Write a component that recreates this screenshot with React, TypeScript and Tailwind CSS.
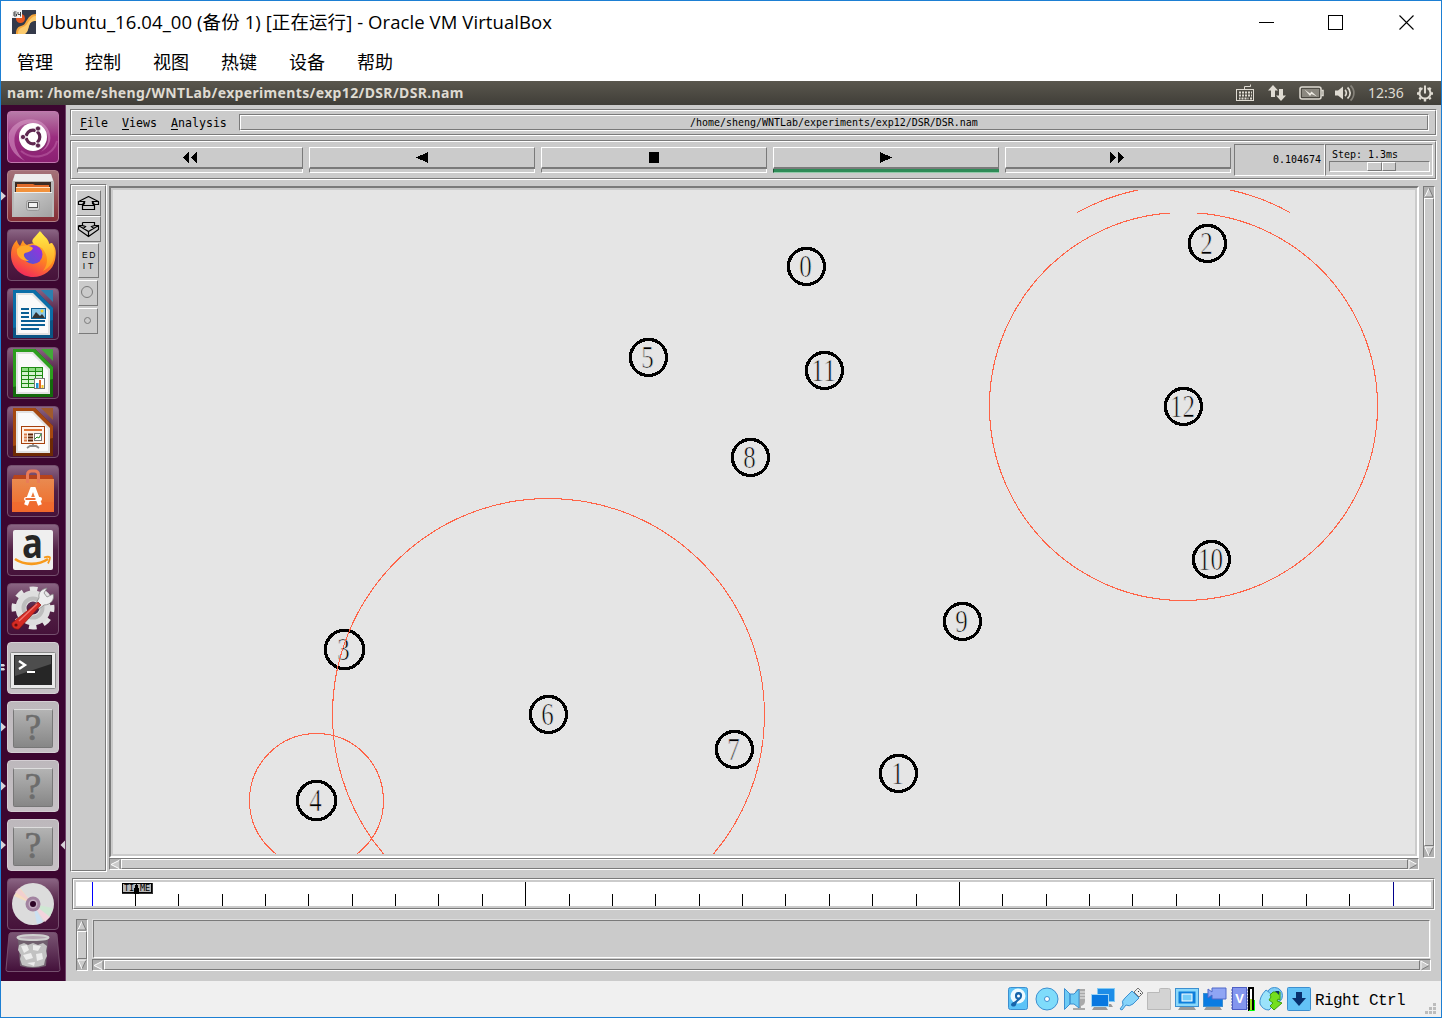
import React from "react";

type Kids = { children?: React.ReactNode; className?: string };

const SUNK = "border border-t-[#7a7a7a] border-l-[#7a7a7a] border-b-white border-r-white";
const RAISED = "border border-t-white border-l-white border-b-[#7a7a7a] border-r-[#7a7a7a]";

/* Two-pixel Tk groove: sunken outer line, raised inner line. */
function Groove({ children, className = "", inner = "" }: Kids & { inner?: string }) {
  return (
    <div className={`${SUNK} ${className}`}>
      <div className={`${RAISED} h-full w-full ${inner}`}>{children}</div>
    </div>
  );
}

function Arrow({ dir }: { dir: "up" | "down" | "left" | "right" }) {
  const rot = { up: 0, right: 90, down: 180, left: 270 }[dir];
  const light = "#ffffff";
  const dark = "#7a7a7a";
  const shade = {
    up: [light, dark, dark],
    right: [light, dark, light],
    down: [dark, light, light],
    left: [light, light, dark],
  }[dir];
  return (
    <svg width={dir === "left" ? 11 : 10} height="11" viewBox="0 0 11 11" preserveAspectRatio="none" className="shrink-0">
      <g transform={`rotate(${rot} 5.5 5.5)`}>
        <path d="M5.5 1L10 10H1z" fill="#cbcbcb" />
        <path d="M1 10L5.5 1" stroke={shade[0]} />
        <path d="M5.5 1L10 10" stroke={shade[1]} />
        <path d="M10 10H1" stroke={shade[2]} />
      </g>
    </svg>
  );
}

function VScroll({ className = "" }: { className?: string }) {
  return (
    <div className={`flex w-3 flex-col items-center bg-[#b0b0b0] ${SUNK} ${className}`}>
      <Arrow dir="up" />
      <div className={`w-full flex-1 bg-[#cbcbcb] ${RAISED}`} />
      <Arrow dir="down" />
    </div>
  );
}

function HScroll({ className = "" }: { className?: string }) {
  return (
    <div className={`flex h-3 items-center bg-[#b0b0b0] ${SUNK} ${className}`}>
      <Arrow dir="left" />
      <div className={`h-full flex-1 bg-[#cbcbcb] ${RAISED}`} />
      <Arrow dir="right" />
    </div>
  );
}

/* ---------- window chrome ---------- */

function VBoxLogo() {
  return (
    <svg width="24" height="24" viewBox="0 0 24 24" className="shrink-0">
      <rect width="24" height="24" fill="#343a4a" />
      <path d="M4 24c0-4 1-7 5-8s4-3 6-6 4-6 9-6v7c-5 0-6 2-7 5s-2 7-5 8z" fill="#f6a63c" />
      <path d="M6 24c0-4 2-6 5-7s4-3 6-6 4-5 7-5v5c-5 0-6 2-7 5s-1 6-4 8z" fill="#fccb6e" />
      <circle cx="8.500" cy="8.500" r="4.500" fill="#e8561f" />
      <rect width="10" height="8" fill="#f4f4f4" />
      <path d="M4.500 2H2v4h2.500V4H2M6 2v2.500h2.500M8.500 2v4.500" stroke="#444" fill="none" />
    </svg>
  );
}

function TitleBar() {
  return (
    <div className="flex h-[42px] items-center bg-white pl-[11px] pr-[27px]">
      <VBoxLogo />
      <span className="ml-[5px] whitespace-pre font-['Open_Sans','Noto_Sans_CJK_SC',sans-serif] text-[18.500px] leading-6 tracking-[0.080px] text-black">
        Ubuntu_16.04_00 (备份 1) [正在运行] - Oracle VM VirtualBox
      </span>
      <div className="ml-auto flex items-center text-black">
        <svg width="15" height="15" shapeRendering="crispEdges"><path d="M0 7.500h15" stroke="currentColor" /></svg>
        <svg width="15" height="15" shapeRendering="crispEdges" className="ml-[54px]"><rect x=".5" y=".5" width="14" height="14" fill="none" stroke="currentColor" /></svg>
        <svg width="15" height="15" className="ml-14"><path d="M.5.5l14 14M14.500.5l-14 14" stroke="currentColor" strokeWidth="1.100" /></svg>
      </div>
    </div>
  );
}

function MenuBar() {
  return (
    <div className="flex h-[38px] items-center gap-8 bg-white pb-[2px] pl-4 font-['Noto_Sans_CJK_SC',sans-serif] text-[18px] text-black">
      {["管理", "控制", "视图", "热键", "设备", "帮助"].map((m) => (
        <span key={m}>{m}</span>
      ))}
    </div>
  );
}

function TopPanel() {
  return (
    <div className="flex h-6 items-center bg-gradient-to-b from-[#5a574e] to-[#403e38] pl-[6px] pr-[7px] text-[#dfdbd2]">
      <span className="font-['Noto_Sans',sans-serif] text-[14px] font-bold leading-6 tracking-[0.350px]">
        nam: /home/sheng/WNTLab/experiments/exp12/DSR/DSR.nam
      </span>
      <div className="ml-auto flex items-center">
        <svg width="20" height="20" viewBox="0 0 20 20" fill="none" stroke="#dfdbd2">
          <path d="M9.500 6.500v-3h6V1.500" />
          <rect x="1.500" y="6.500" width="17" height="11" />
          <path d="M4 9.500h13M4 12.500h13M6.500 15.500h7M4 15.500h1.500M15 15.500h2" strokeWidth="2" strokeDasharray="2 1" />
        </svg>
        <svg width="18" height="18" viewBox="0 0 18 18" fill="#dfdbd2" className="ml-[13px]">
          <path d="M5 1L0 6.500h3V13h4V6.500h3zM13 17l5-5.500h-3V5h-4v6.500H8z" />
        </svg>
        <svg width="25" height="14" viewBox="0 0 25 14" fill="none" stroke="#dfdbd2" className="ml-[13px]">
          <rect x="1" y="1" width="21" height="12" rx="2" strokeWidth="1.500" />
          <rect x="3" y="3" width="17" height="8" fill="#8b887f" stroke="none" />
          <path d="M22.500 4.500h1.500v5h-1.500" strokeWidth="1.500" />
          <path d="M5.500 3.500l5.500 4 1.500-2 5.500 5-5.500-2.500-1.500 2z" fill="#efece4" stroke="none" />
        </svg>
        <svg width="20" height="18" viewBox="0 0 20 18" fill="none" stroke="#dfdbd2" strokeWidth="1.700" className="ml-[11px]">
          <path d="M0 6.500h3L8 2.500v13l-5-4H0z" fill="#dfdbd2" stroke="none" />
          <path d="M10 6a4 4 0 010 6M12.500 3.500a7 7 0 010 11" />
          <path d="M15.500 1.500a10 10 0 010 15" stroke="#85827a" />
        </svg>
        <span className="ml-[13px] w-[36px] whitespace-nowrap font-['Noto_Sans',sans-serif] text-[14px] leading-6">12:36</span>
        <svg width="18" height="18" viewBox="0 0 18 18" fill="none" stroke="#dfdbd2" className="ml-3">
          <path d="M6.500 4.200a5.500 5.500 0 105 0" strokeWidth="2" />
          <path d="M9 1.500v8" strokeWidth="2" />
          <path d="M1 9.500h2M15 9.500h2M3.300 3.800l1.500 1.500M14.700 3.800l-1.500 1.500M3.300 15.200l1.500-1.500M14.700 15.200l-1.500-1.500M9 15v2.500" strokeWidth="2.400" />
        </svg>
      </div>
    </div>
  );
}

/* ---------- launcher ---------- */

function DocIcon({ main, dark, fold, children }: { main: string; dark: string; fold: string; children: React.ReactNode }) {
  return (
    <g>
      <path d="M6 2h22l18 18v30H6z" fill={dark} />
      <path d="M6 2h22l18 18v12L6 40z" fill={main} />
      <path d="M9 5h17l17 17v25H9z" fill="#e2e2e2" />
      <path d="M11 7h14l16 16v22H11z" fill="#fafafa" />
      <path d="M34 2h12v12z" fill={fold} />
      {children}
    </g>
  );
}

function Question() {
  return (
    <g>
      <rect x="6.500" y="8.500" width="39" height="38" rx="1" fill="url(#qg)" stroke="#777" />
      <path d="M7 8.500h38" stroke="#ddd" />
      <text x="26" y="39" textAnchor="middle" fontFamily="Liberation Serif, serif" fontSize="37" fill="#6c6c6c" stroke="#6c6c6c" strokeWidth=".7">?</text>
    </g>
  );
}

function AppIcon({ kind }: { kind: string }) {
  switch (kind) {
    case "dash":
      return (
        <g>
          <path d="M2 22C8 6 34 2 42 20c4 10-1 17-8 21 8-7 9-15 3-22C29 9 12 10 8 24c-2 8 1 18 10 26C6 44 0 34 2 22z" fill="#e0a5d0" opacity=".5" />
          <path d="M50 30C46 46 26 50 14 40" fill="none" stroke="#d68ac2" strokeOpacity=".35" strokeWidth="2" />
          <circle cx="26.500" cy="27" r="14.500" fill="#7d3069" opacity=".5" />
          <circle cx="26" cy="26" r="14" fill="#fff" />
          <circle cx="26" cy="26" r="6.800" fill="none" stroke="#5e2750" strokeWidth="3.200" />
          <path d="M26 26h-10M26 26l5-9M26 26l5 9" stroke="#fff" strokeWidth="1.400" />
          <circle cx="16" cy="26" r="2.600" fill="#5e2750" stroke="#fff" strokeWidth=".8" />
          <circle cx="31" cy="17.500" r="2.600" fill="#5e2750" stroke="#fff" strokeWidth=".8" />
          <circle cx="31" cy="34.500" r="2.600" fill="#5e2750" stroke="#fff" strokeWidth=".8" />
        </g>
      );
    case "files":
      return (
        <g>
          <path d="M8 4h36l3 8v35H5V12z" fill="#b9b9b9" />
          <path d="M8 4h36l2 7H6z" fill="#ececec" />
          <rect x="8" y="12" width="36" height="12" fill="#3b2c25" />
          <path d="M10 14h16l2 1h14v8H10z" fill="#e06b2a" />
          <path d="M9 18h34v5H9z" fill="#f2923c" />
          <path d="M9 17.500h34" stroke="#ffe0c0" />
          <rect x="7" y="22" width="38" height="25" fill="url(#met)" />
          <path d="M7 22.500h38" stroke="#eee" />
          <rect x="19.500" y="30.500" width="13" height="10" rx="2" fill="#ccc" stroke="#9a9a9a" />
          <rect x="21.500" y="32.500" width="9" height="5" fill="#f2f2f2" stroke="#555" />
        </g>
      );
    case "firefox":
      return (
        <g>
          <path d="M4 26c0-8 3-12 6-15 0 2 1 4 3 6l3-6c1 3 2 4 4 5 4-2 9-2 13 0 0-5-1-9 1-13 3 5 8 7 8 12l3-1c5 6 4 11 3 17-2 10-11 17-22 17S4 39 4 26z" fill="url(#ffx)" />
          <path d="M33 2c3 5 8 7 9 13l3-1c5 12 2 22-9 28 6-8 5-16-1-23-5-3-12-4-9-9z" fill="url(#ffy)" />
          <circle cx="26" cy="25.500" r="9.500" fill="url(#glb)" />
          <path d="M10 20c4-5 13-4 16-1-1 3-4 4-8 5-3 2 0 6 4 8-7 0-13-4-12-12z" fill="#ffab2a" />
        </g>
      );
    case "writer":
      return (
        <DocIcon main="#0b6ea8" dark="#0a5585" fold="#2c7fae">
          <path d="M14 21h8M14 25h8M14 29h8M14 33h24M14 37h24M14 41h18" stroke="#0b5f94" strokeWidth="2" />
          <rect x="24.500" y="20.500" width="14" height="10" fill="#8cc9e8" stroke="#0b5f94" />
          <path d="M25 30l4-6 4 4 2-2 3 4z" fill="#333" />
          <circle cx="35" cy="23" r="1.500" fill="#f5d02c" />
        </DocIcon>
      );
    case "calc":
      return (
        <DocIcon main="#2c9e1e" dark="#146a0c" fold="#43a838">
          <rect x="14" y="20" width="22" height="21" fill="#1d8a12" />
          {[0, 1, 2].map((c) =>
            [0, 1, 2, 3, 4].map((r) => (
              <rect key={`${c}-${r}`} x={15 + c * 7} y={21 + r * 4} width="6" height="3" fill={r ? "#d6f3d0" : "#8fdc84"} />
            )),
          )}
          <rect x="27.500" y="31.500" width="10" height="10" fill="#fff" stroke="#777" />
          <path d="M29 36h2.500v5H29z" fill="#1c93d2" />
          <path d="M32 33h2v8h-2z" fill="#e0662a" />
          <path d="M34.500 38h2v3h-2z" fill="#f3c41d" />
        </DocIcon>
      );
    case "impress":
      return (
        <DocIcon main="#a5480f" dark="#6e2a04" fold="#a05a2c">
          <rect x="14.500" y="20.500" width="23" height="17" fill="#fff2e8" stroke="#a5400d" />
          <path d="M17 24h18" stroke="#e07434" strokeWidth="2" />
          <path d="M17 28.500h3M17 31.500h3M17 34.500h3" stroke="#d97b49" strokeWidth="2" />
          <path d="M21 28.500h5M21 31.500h5M21 34.500h5" stroke="#5e2508" strokeWidth="2" />
          <rect x="27.500" y="27.500" width="7" height="7" fill="#fff" stroke="#777" />
          <path d="M28 33l2-2 2 1 2-4" stroke="#228c1e" fill="none" />
          <path d="M20 42l3-2h6l3 2M26 38v3" stroke="#888" strokeWidth="1.800" fill="none" />
        </DocIcon>
      );
    case "software":
      return (
        <g>
          <path d="M7 10h38l2 5H5z" fill="#b7431c" />
          <path d="M5 14h42v33H5z" fill="url(#bag)" />
          <path d="M5 37h42v10H5z" fill="#f0682e" opacity=".6" />
          <path d="M20.500 18v-8q0-4 4-4h3q4 0 4 4v8" fill="none" stroke="#e97b58" strokeWidth="3" />
          <path d="M19 40L25 24h2l6 16" fill="none" stroke="#fff" strokeWidth="4" />
          <rect x="17" y="32" width="18" height="4" rx="2" fill="#fff" />
          <path d="M18.500 34h10" stroke="#ec5d1f" strokeWidth="1.800" />
        </g>
      );
    case "amazon":
      return (
        <g>
          <rect x="6" y="6" width="40" height="40" rx="2" fill="#efefef" />
          <text x="25.500" y="34" textAnchor="middle" textLength="21" lengthAdjust="spacingAndGlyphs" fontFamily="Open Sans, sans-serif" fontWeight="700" fontSize="41" fill="#262626">a</text>
          <path d="M8 35c10 7 24 6 33 0" fill="none" stroke="#f79a1c" strokeWidth="2.600" />
          <path d="M37 33.500c3-1 5-1 6 0 0 2-1 4-2 6" fill="none" stroke="#f79a1c" strokeWidth="1.800" />
        </g>
      );
    case "settings":
      return (
        <g>
          <circle cx="26" cy="25" r="18.500" fill="none" stroke="#e4e4e4" strokeWidth="6" strokeDasharray="7.500 7.030" strokeDashoffset="3.700" />
          <circle cx="26" cy="25" r="12" fill="none" stroke="#dedede" strokeWidth="11" />
          <circle cx="26" cy="25" r="9.500" fill="none" stroke="#bdbdbd" strokeWidth="4" />
          <path d="M32 15c-1-6 3-9 8-10l-3 5 3 4 6-3c2 5-2 11-9 11l-5 4-4-4z" fill="#eee" stroke="#888" strokeWidth=".8" />
          <path d="M31 19l3 3-22 24c-4 1-8-2-7-6z" fill="#d52b24" stroke="#8e1410" strokeWidth=".7" />
          <path d="M12 38l18-17" stroke="#f1736d" strokeWidth="1.500" />
          <circle cx="9" cy="42" r="1.600" fill="#6b0f0c" />
        </g>
      );
    case "terminal":
      return (
        <g>
          <rect x="3.500" y="10.500" width="45" height="36" rx="1" fill="#e9e9e9" stroke="#8a8a8a" />
          <rect x="7" y="13" width="38" height="30" fill="#262626" />
          <path d="M8 14h36v8L8 34z" fill="#4d4d4d" />
          <path d="M12 19l6 4-6 4" fill="none" stroke="#fff" strokeWidth="2.400" />
          <path d="M20 30h8" stroke="#fff" strokeWidth="2" />
        </g>
      );
    case "disc":
      return (
        <g>
          <circle cx="26" cy="26" r="21" fill="#dcdcdc" />
          <path d="M26 26L7 18 13 10z" fill="#f5dcbf" />
          <path d="M26 26L8 14l4-4z" fill="#f1c9d5" opacity=".7" />
          <path d="M26 26l20 4-3 9z" fill="#cfe7d3" />
          <path d="M26 26l17 13-5 5z" fill="#f3d4dd" />
          <path d="M26 26l10 18-6 2z" fill="#cbe0f2" />
          <circle cx="26" cy="26" r="7.500" fill="#a283a0" />
          <circle cx="26" cy="26" r="4.500" fill="#c3adc1" />
          <circle cx="26" cy="26" r="3" fill="#2d0426" />
        </g>
      );
    case "unknown":
      return <Question />;
    default:
      return null;
  }
}

const TILE = "flex h-[52px] w-[52px] shrink-0 rounded-[4px] border";
const TILE_DARK = `${TILE} border-[#75506e] bg-gradient-to-b from-[#8a6483] via-[#512045] to-[#46123a]`;
const TILE_LIGHT = `${TILE} border-[#d4ced3] bg-gradient-to-b from-[#bdb8bc] to-[#c6c1c5]`;

const APPS: { kind: string; tile: string; mark?: string; active?: boolean }[] = [
  { kind: "dash", tile: `${TILE} border-[#c177ae] bg-gradient-to-b from-[#b77ba8] via-[#9b2d80] to-[#8b1f72]` },
  { kind: "files", tile: `${TILE} border-[#b08088] bg-gradient-to-b from-[#a47279] to-[#842c35]`, mark: "one" },
  { kind: "firefox", tile: TILE_DARK },
  { kind: "writer", tile: TILE_DARK },
  { kind: "calc", tile: TILE_DARK },
  { kind: "impress", tile: TILE_DARK },
  { kind: "software", tile: TILE_DARK },
  { kind: "amazon", tile: TILE_DARK },
  { kind: "settings", tile: TILE_DARK },
  { kind: "terminal", tile: TILE_LIGHT, mark: "two" },
  { kind: "unknown", tile: TILE_LIGHT, mark: "one" },
  { kind: "unknown", tile: TILE_LIGHT, mark: "one" },
  { kind: "unknown", tile: TILE_LIGHT, mark: "one", active: true },
  { kind: "disc", tile: TILE_DARK },
];

function Launcher() {
  return (
    <div className="flex w-[65px] shrink-0 flex-col border-r border-[#6f4268] bg-[#3c0630] pt-[6px]">
      <svg width="0" height="0" className="absolute">
        <defs>
          <linearGradient id="qg" x2="0" y2="1"><stop stopColor="#b4b4b4" /><stop offset="1" stopColor="#868686" /></linearGradient>
          <linearGradient id="met" x2="1" y2="1"><stop stopColor="#d0d0d0" /><stop offset="1" stopColor="#a2a2a2" /></linearGradient>
          <linearGradient id="bag" x2="0" y2="1"><stop stopColor="#e98a50" /><stop offset="1" stopColor="#f06a28" /></linearGradient>
          <linearGradient id="ffx" x1=".8" y1="0" x2=".3" y2="1"><stop stopColor="#ffd03a" /><stop offset=".5" stopColor="#ff8a1e" /><stop offset="1" stopColor="#f3265c" /></linearGradient>
          <linearGradient id="ffy" x2="0" y2="1"><stop stopColor="#fff04a" /><stop offset="1" stopColor="#ff961e" /></linearGradient>
          <linearGradient id="glb" x1="1" x2="0" y2="1"><stop stopColor="#a12be0" /><stop offset="1" stopColor="#4a5bd0" /></linearGradient>
        </defs>
      </svg>
      <div className="flex flex-col gap-[7px]">
        {APPS.map((a, i) => (
          <div key={i} className="flex h-[52px] items-center">
            <svg width="6" height="12" viewBox="0 0 6 12" fill="#d9d3d8" className="shrink-0">
              {a.mark === "one" && <path d="M0 1.500L5 6 0 10.500z" />}
              {a.mark === "two" && <path d="M0 2h3l1 1.500-1 1H0zM0 6h3l1 1.500-1 1H0z" />}
            </svg>
            <div className={a.tile}>
              <svg width="52" height="52" viewBox="0 0 52 52" className="-m-px shrink-0">
                <AppIcon kind={a.kind} />
              </svg>
            </div>
            {a.active && (
              <svg width="6" height="12" viewBox="0 0 6 12" fill="#d9d3d8" className="shrink-0"><path d="M6 1.500L1.500 6 6 10.500z" /></svg>
            )}
          </div>
        ))}
      </div>
      <svg width="56" height="43" viewBox="0 0 56 43" className="ml-1 mt-px shrink-0">
        <defs>
          <linearGradient id="tr" x2="0" y2="1"><stop stopColor="#7b5674" /><stop offset="1" stopColor="#43103a" /></linearGradient>
        </defs>
        <path d="M6.500 1.500h43q2 0 2.500 2l3 35q0 2-2 2H3q-2 0-2-2l3-35q.5-2 2.500-2z" fill="url(#tr)" stroke="#75506e" />
        <path d="M13 8l2 27q13 4 26 0l2-27z" fill="#70606e" />
        <ellipse cx="28" cy="6.500" rx="15.500" ry="2.600" fill="#b5a5b2" stroke="#cfcfcf" strokeWidth="2" />
        <path d="M14 14l5-2 4 2 5-2 5 2 5-2 4 3-1 5 1 5-2 4-1 5q-11 4-22 0l-2-6 1-4-3-5z" fill="#c2c2c2" />
        <path d="M16 15l6-1 2 5-5 3zM28 14l8 1-3 5-5-1zM18 24l8-2 2 5-7 2zM31 23l6-1 1 6-6 2zM22 32l8-1-1 4z" fill="#ececec" />
      </svg>
    </div>
  );
}

/* ---------- nam ---------- */

function NamMenu() {
  return (
    <Groove className="h-[27px]" inner="flex items-center pl-2 pr-[6px] font-['DejaVu_Sans_Mono',monospace] text-[11.620px] text-black">
      {["File", "Views", "Analysis"].map((m) => (
        <span key={m} className="mr-[14px] leading-[20px]">
          <span className="underline underline-offset-2">{m[0]}</span>
          {m.slice(1)}
        </span>
      ))}
      <Groove className="-ml-[2px] h-[17px] flex-1" inner="text-center font-['DejaVu_Sans_Mono',monospace] text-[9.960px] leading-[13px]">
        /home/sheng/WNTLab/experiments/exp12/DSR/DSR.nam
      </Groove>
    </Groove>
  );
}

const CONTROLS = [
  "M7 0v11L1 5.500zM15 0v11L9 5.500z",
  "M14 0v11L2 5.500z",
  "M3 0h10v11H3z",
  "M2 0v11L14 5.500z",
  "M0 0v11L6 5.500zM8 0v11L14 5.500z",
];

function Toolbar() {
  return (
    <Groove className="h-10" inner="flex pl-[5px] pt-[2px]">
      <div className="flex gap-[6px] pt-[3px]">
        {CONTROLS.map((d, i) => (
          <div key={i} className="h-[26px] w-[226px]">
            <div className="flex h-[22px] items-center justify-center border border-b-2 border-b-[#7a7a7a] border-l-white border-r-[#7a7a7a] border-t-white">
              <svg width="16" height="11" shapeRendering="crispEdges"><path d={d} /></svg>
            </div>
            <div
              className={
                i === 3
                  ? "h-1 border-b border-l border-b-[#8fc9a8] border-l-[#1c5535] bg-[#2e8b57]"
                  : "h-1 border-b border-l border-r border-b-white border-l-[#7a7a7a] border-r-white"
              }
            />
          </div>
        ))}
      </div>
      <div className={`ml-[3px] h-8 w-[91px] pr-[3px] text-right font-['DejaVu_Sans_Mono',monospace] text-[9.960px] leading-[30px] ${SUNK}`}>0.104674</div>
      <div className={`h-8 w-[108px] pl-[3px] ${SUNK}`}>
        <div className="h-4 pl-[3px] font-['DejaVu_Sans_Mono',monospace] text-[9.960px] leading-[20px]">Step: 1.3ms</div>
        <div className={`flex h-[11px] w-[101px] pl-[37px] ${SUNK}`}>
          <div className={`h-[9px] w-[15px] ${RAISED}`} />
          <div className={`h-[9px] w-[14px] ${RAISED}`} />
        </div>
      </div>
    </Groove>
  );
}

function ZoomTools() {
  return (
    <Groove className="w-[37px]" inner="pt-1 text-black">
      <div className={`ml-1 h-[26px] w-[25px] ${RAISED}`}>
        <svg width="23" height="24" viewBox="0 0 23 24" fill="none" stroke="#000" strokeWidth="1.200">
          <path d="M11.500 5.500l-10 5v3h4M11.500 5.500l10 5v3h-4M1.500 10.500h6l-2 3M21.500 10.500h-6l2 3M5.500 14.500h12v4h-12zM7.500 10.500v2l-2 2M15.500 10.500v2l2 2" />
        </svg>
      </div>
      <div className={`ml-1 h-[26px] w-[25px] ${RAISED}`}>
        <svg width="23" height="24" viewBox="0 0 23 24" fill="none" stroke="#000" strokeWidth="1.200">
          <path d="M5.500 5.500h12v3l-3 1 2 2M5.500 5.500v3l3 1-2 2M1.500 8.500h5M16.500 8.500h5v4l-10 7-10-7v-4M1.500 8.500l10 6 10-6M11.500 14.500v5" />
        </svg>
      </div>
      <div className={`ml-[6px] mt-px flex h-[35px] w-[21px] flex-col items-center justify-center pl-[2px] pt-px font-['Liberation_Sans',sans-serif] text-[8.500px] leading-[11px] tracking-[1.500px] ${RAISED}`}>
        <span>ED</span>
        <span className="tracking-[3px]">IT</span>
      </div>
      <div className={`ml-[6px] mt-[2px] h-[26px] w-5 ${RAISED}`}>
        <svg width="18" height="24" fill="none" stroke="#7a7a7a"><circle cx="8" cy="11" r="5.500" /></svg>
      </div>
      <div className={`ml-[6px] mt-[2px] h-[26px] w-5 ${RAISED}`}>
        <svg width="18" height="24" fill="none" stroke="#7a7a7a"><circle cx="8.500" cy="11.500" r="3" /></svg>
      </div>
    </Groove>
  );
}

/* [label, x, y, radius] */
const NODES: [string, number, number, number][] = [
  ["0", 806.5, 266.5, 18],
  ["1", 898.5, 773.5, 18],
  ["2", 1207.5, 243.5, 18],
  ["3", 344.5, 649.5, 19],
  ["4", 316.5, 800.5, 19],
  ["5", 648.5, 357.5, 18],
  ["6", 548.5, 714.5, 18],
  ["7", 734.5, 749.5, 18],
  ["8", 750.5, 457.5, 18],
  ["9", 962.5, 621.5, 18],
  ["10", 1211.5, 559.5, 18],
  ["11", 824.5, 370.5, 18],
  ["12", 1183.5, 406.5, 18],
];

function NetworkView() {
  return (
    <svg width="1302" height="664" viewBox="113 190 1302 664" className="block bg-[#e5e5e5]">
      {NODES.map(([label, x, y, r]) => (
        <g key={label}>
          <circle cx={x} cy={y} r={r + 0.1} fill="none" stroke="#000" strokeWidth="3.200" shapeRendering="crispEdges" />
          <text
            x={x - 1}
            y={y + 10.5}
            textAnchor="middle"
            textLength={label.length * 12.5}
            lengthAdjust="spacingAndGlyphs"
            fontFamily="Liberation Serif, serif"
            fontSize="30.5"
            stroke="#e5e5e5"
            strokeWidth=".7"
          >
            {label}
          </text>
        </g>
      ))}
      <g fill="none" stroke="#ff6347" strokeWidth="1.080" shapeRendering="crispEdges">
        <circle cx="548.5" cy="714.5" r="216" />
        <circle cx="316.5" cy="800.5" r="67" />
        <path d="M1197.500 213A194 194 0 1 1 1169.500 213" />
        <path d="M1077 212.500A221.300 221.300 0 0 1 1140 189.500M1228 189.500A221.300 221.300 0 0 1 1290 212.500" />
      </g>
    </svg>
  );
}

const TICKS = Array.from({ length: 31 }, (_, i) => i);

function Timeline() {
  return (
    <Groove className="ml-[2px] h-8 w-[1363px]" inner="p-[2px]">
      <svg width="1355" height="24" viewBox="76 882 1355 24" className="block bg-white" shapeRendering="crispEdges">
        {TICKS.map((i) => (
          <rect
            key={i}
            x={Math.floor(92 + i * 43.37)}
            y={i % 10 ? 894 : 882}
            width="1"
            height={i % 10 ? 12 : 24}
            fill={i === 0 ? "#0000ff" : i === 30 ? "#00008b" : "#000"}
          />
        ))}
        <rect x="122" y="883" width="31" height="11" fill="#333" />
        <rect x="122.500" y="883.500" width="29" height="9" fill="#b8b8b8" stroke="#000" />
        <g fontFamily="DejaVu Sans Mono, monospace" fontSize="8.500" fill="#000">
          <text x="124" y="891">TI</text>
          <text x="140" y="891">ME</text>
        </g>
        <path d="M136 883h1l1 4 1 2v5h-5v-5l1-2z" />
      </svg>
    </Groove>
  );
}

function Nam() {
  return (
    <div className="flex flex-1 flex-col bg-[#cbcbcb] pl-1 pr-1 pt-1">
      <NamMenu />
      <div className="h-1" />
      <Toolbar />
      <div className="mt-1 flex h-[688px]">
        <ZoomTools />
        <div className="ml-[2px] mt-[2px] w-[1310px]">
          <div className="h-[672px] border-2 border-b-white border-l-[#7a7a7a] border-r-white border-t-[#7a7a7a] p-[2px]">
            <NetworkView />
          </div>
          <HScroll />
        </div>
        <VScroll className="ml-1 mt-[2px] h-[672px]" />
      </div>
      <div className="mt-[6px]">
        <Timeline />
      </div>
      <div className="mt-[9px] flex h-[52px] pl-[6px]">
        <VScroll />
        <div className="ml-1 w-[1339px]">
          <div className="h-10 border border-[#dddddd] border-b-[#cbcbcb]">
            <div className={`h-[38px] ${SUNK}`} />
          </div>
          <HScroll />
        </div>
      </div>
    </div>
  );
}

/* ---------- VirtualBox status bar ---------- */

function StatusIcons() {
  const s = "#3c8fd0";
  return (
    <div className="flex gap-1">
      <svg width="24" height="24" viewBox="0 0 24 24">
        <rect x="1.500" y=".5" width="19" height="22" rx="2" fill="#5cc3f7" stroke={s} />
        <circle cx="11" cy="9" r="7.500" fill="#eefaff" />
        <path d="M8 8a3.500 3.500 0 117 1c0 4-5 4-6 9-1 2-4 2-5 0 0-3 5-3 6-6-2 0-2-2-2-4z" fill="#1764ab" />
        <circle cx="11.500" cy="9" r="1.500" fill="#fff" />
      </svg>
      <svg width="24" height="24" viewBox="0 0 24 24">
        <circle cx="12" cy="12" r="11" fill="#7fdcfb" stroke={s} />
        <circle cx="12" cy="12" r="2.500" fill="#fff" stroke={s} />
      </svg>
      <svg width="24" height="24" viewBox="0 0 24 24">
        <path d="M14 2h8v12q0 4-4 5v2h4v2H10v-2h5v-2q-3-1-3-5V5z" fill="#a9a9a9" />
        <path d="M17 5h5M17 8h5M17 11h5" stroke="#eee" />
        <path d="M1.500 1.500L7 7v10l-5.500 5.500zM7 7h4l5-5v19l-5-4H7z" fill="#6ecbf5" stroke={s} />
      </svg>
      <svg width="24" height="24" viewBox="0 0 24 24">
        <path d="M12 17h8l2 3h-9z" fill="#999" />
        <rect x="6.500" y="1.500" width="17" height="13" fill="#1d8de8" stroke="#83c9f2" />
        <rect x=".5" y="7.500" width="17" height="12" fill="#0878e0" stroke="#9fd5f4" />
        <path d="M3 20h12l2 3H1z" fill="#999" />
      </svg>
      <svg width="24" height="24" viewBox="0 0 24 24">
        <path d="M15 5l4-4 5 5-4 4z" fill="#eee" stroke="#777" />
        <path d="M19 4l1 1M21 6l1 1" stroke="#333" />
        <path d="M13 4l7 7-6 6q-4 3-7 1l-4 5-2-1 3-4q-2-4 2-7z" fill="#86d4fa" stroke={s} />
      </svg>
      <svg width="24" height="24" viewBox="0 0 24 24">
        <path d="M.5 5.500h12v-3q0-1 1-1h8q2 0 2 2v19H.5z" fill="#d3d3d3" stroke="#b9b9b9" />
      </svg>
      <svg width="24" height="24" viewBox="0 0 24 24">
        <path d="M5 20h14l2 3H3z" fill="#999" />
        <rect x=".5" y="1.500" width="23" height="18" fill="#8ad8fb" stroke={s} />
        <rect x="3.500" y="4.500" width="17" height="12" fill="#0d7fdc" />
        <rect x="7" y="7" width="10" height="7" fill="#74cdf8" stroke="#fff" />
      </svg>
      <svg width="24" height="24" viewBox="0 0 24 24">
        <rect x=".5" y="6.500" width="19" height="13" fill="#0a7ce2" stroke={s} />
        <path d="M3 20h14l2 3H1z" fill="#999" />
        <path d="M5 2l4 3V1h14v11H9V8l-4 3z" fill="#8fa5f4" stroke="#5068c8" />
      </svg>
      <svg width="24" height="24" viewBox="0 0 24 24">
        <path d="M0 3h17M0 6h17M0 9h17M0 12h17M0 15h17M0 18h17M0 21h17" stroke="#4a56b0" />
        <rect x="1.500" y=".5" width="14" height="22" fill="#8496ee" stroke="#4e5fc5" />
        <text x="8.500" y="16" textAnchor="middle" fontFamily="Liberation Sans, sans-serif" fontWeight="700" fontSize="13" fill="#fff">V</text>
        <rect x="17" y="0" width="6" height="24" fill="#000" />
        <path d="M19 2h2v10h-2z" fill="#fff" />
        <path d="M19 12h2v11h-2z" fill="#9be01e" />
        <path d="M23.500 13v10.500H18" fill="none" stroke="#0f0" />
      </svg>
      <svg width="24" height="24" viewBox="0 0 24 24">
        <circle cx="15.500" cy="8.500" r="8" fill="#7fcdf5" stroke={s} />
        <path d="M7 3q-7 7-6 14 3 6 9 6 5-4 5-8 0-7-8-12z" fill="#9be3fb" stroke={s} />
        <path d="M11 8l3-3h7v8l-2-1-1 2 5 2-8 7-4-4 3-3-4-3 2-3z" fill="#74df1e" stroke="#3f9c10" />
        <path d="M16 4h4v4z" fill="#10375f" />
      </svg>
      <svg width="24" height="24" viewBox="0 0 24 24">
        <rect x=".5" y=".5" width="23" height="23" rx="1" fill="#63c2f6" stroke={s} />
        <path d="M9 5h6v6h4l-7 8-7-8h4z" fill="#08306e" />
      </svg>
    </div>
  );
}

function StatusBar() {
  return (
    <div className="relative flex h-9 items-center justify-end bg-[#f0f0f0] pr-[36px]">
      <StatusIcons />
      <span className="ml-1 pt-1 font-['Liberation_Mono',monospace] text-[16px] leading-6 tracking-[-0.600px] text-black">Right Ctrl</span>
      <svg width="12" height="12" className="absolute bottom-[2px] right-1" fill="#bcbcbc" shapeRendering="crispEdges">
        <path d="M8 0h3v3H8zM4 4h3v3H4zM8 4h3v3H8zM0 8h3v3H0zM4 8h3v3H4zM8 8h3v3H8z" />
      </svg>
    </div>
  );
}

export default function App() {
  return (
    <div className="flex h-[1018px] w-[1442px] flex-col overflow-hidden border border-[#1d7fd3] bg-white">
      <TitleBar />
      <MenuBar />
      <TopPanel />
      <div className="flex h-[876px]">
        <Launcher />
        <Nam />
      </div>
      <StatusBar />
    </div>
  );
}
